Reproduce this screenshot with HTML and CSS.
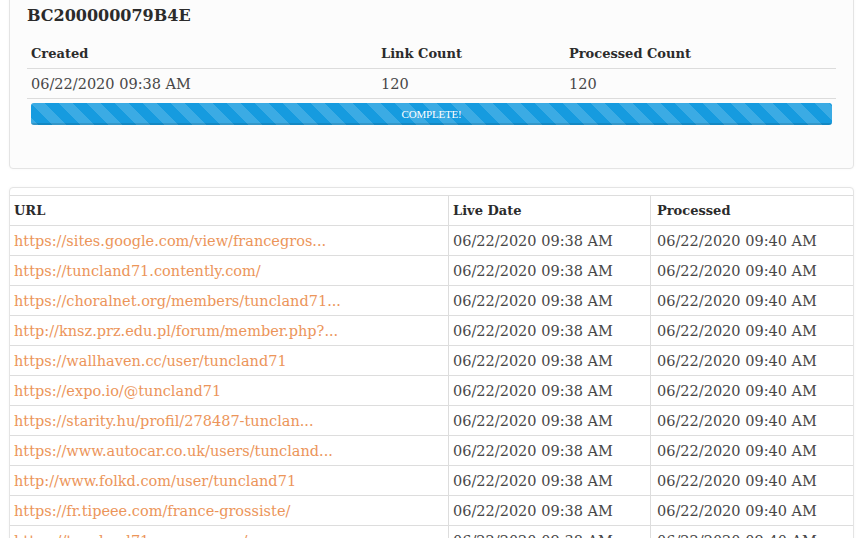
FILE: index.html
```html
<!DOCTYPE html>
<html lang="en">
<head>
<meta charset="utf-8">
<title>BC200000079B4E</title>
<link rel="stylesheet" href="styles.css">
</head>
<body>
<div class="page">
  <section class="card summary">
    <h2 class="batch-id">BC200000079B4E</h2>
    <table class="summary-table">
      <thead>
        <tr><th class="c-created">Created</th><th class="c-links">Link Count</th><th>Processed Count</th></tr>
      </thead>
      <tbody>
        <tr><td>06/22/2020 09:38 AM</td><td>120</td><td>120</td></tr>
      </tbody>
    </table>
    <div class="progress"><div class="progress-bar" style="width:100%">COMPLETE!</div></div>
  </section>

  <section class="card links">
    <table class="link-table">
      <thead>
        <tr><th class="c-url">URL</th><th class="c-live">Live Date</th><th>Processed</th></tr>
      </thead>
      <tbody>
        <tr><td><a href="#">https://sites.google.com/view/francegros...</a></td><td>06/22/2020 09:38 AM</td><td>06/22/2020 09:40 AM</td></tr>
        <tr><td><a href="#">https://tuncland71.contently.com/</a></td><td>06/22/2020 09:38 AM</td><td>06/22/2020 09:40 AM</td></tr>
        <tr><td><a href="#">https://choralnet.org/members/tuncland71...</a></td><td>06/22/2020 09:38 AM</td><td>06/22/2020 09:40 AM</td></tr>
        <tr><td><a href="#">http://knsz.prz.edu.pl/forum/member.php?...</a></td><td>06/22/2020 09:38 AM</td><td>06/22/2020 09:40 AM</td></tr>
        <tr><td><a href="#">https://wallhaven.cc/user/tuncland71</a></td><td>06/22/2020 09:38 AM</td><td>06/22/2020 09:40 AM</td></tr>
        <tr><td><a href="#">https://expo.io/@tuncland71</a></td><td>06/22/2020 09:38 AM</td><td>06/22/2020 09:40 AM</td></tr>
        <tr><td><a href="#">https://starity.hu/profil/278487-tunclan...</a></td><td>06/22/2020 09:38 AM</td><td>06/22/2020 09:40 AM</td></tr>
        <tr><td><a href="#">https://www.autocar.co.uk/users/tuncland...</a></td><td>06/22/2020 09:38 AM</td><td>06/22/2020 09:40 AM</td></tr>
        <tr><td><a href="#">http://www.folkd.com/user/tuncland71</a></td><td>06/22/2020 09:38 AM</td><td>06/22/2020 09:40 AM</td></tr>
        <tr><td><a href="#">https://fr.tipeee.com/france-grossiste/</a></td><td>06/22/2020 09:38 AM</td><td>06/22/2020 09:40 AM</td></tr>
        <tr><td><a href="#">https://tuncland71.exposure.co/</a></td><td>06/22/2020 09:38 AM</td><td>06/22/2020 09:40 AM</td></tr>
      </tbody>
    </table>
  </section>
</div>
</body>
</html>
```

FILE: styles.css
```css
html, body {
  margin: 0;
  background: #ffffff;
}

body {
  font-family: "DejaVu Serif", "Liberation Serif", serif;
  font-size: 14.5px;
  color: #474747;
}

.page {
  padding: 0 11px 0 9px;
  margin-top: -14px;
}

.card {
  background: #fcfcfc;
  border: 1px solid #e4e4e4;
  border-radius: 4px;
  box-shadow: 0 0 3px rgba(0, 0, 0, 0.04);
}

.summary {
  padding: 0 17px 43px 17px;
}

.batch-id {
  margin: 0;
  padding: 18px 0 12px 0;
  font-size: 16px;
  font-weight: bold;
  color: #2b2b2b;
  line-height: 22px;
}

table {
  width: 100%;
  border-collapse: collapse;
}

th {
  text-align: left;
  font-size: 13px;
  font-weight: bold;
  color: #2b2b2b;
}

.summary-table th,
.summary-table td {
  padding: 0 4px;
  height: 29px;
  border-bottom: 1px solid #dcdcdc;
}

.summary-table .c-created { width: 342px; }
.summary-table .c-links { width: 180px; }

.progress {
  margin: 4px 4px 0 4px;
  height: 22px;
  background: #e9e9e9;
  border-radius: 3px;
  overflow: hidden;
}

.progress-bar {
  height: 100%;
  background-color: #169bdf;
  background-image: linear-gradient(45deg,
    rgba(255, 255, 255, 0.16) 25%, transparent 25%,
    transparent 50%, rgba(255, 255, 255, 0.16) 50%,
    rgba(255, 255, 255, 0.16) 75%, transparent 75%, transparent);
  background-size: 28px 28px;
  box-shadow: inset 0 -2px 0 rgba(0, 0, 0, 0.12);
  color: #ffffff;
  font-family: "Liberation Serif", serif;
  font-size: 11px;
  line-height: 22px;
  text-align: center;
  letter-spacing: -0.2px;
}

.links {
  margin-top: 18px;
  padding-top: 7px;
  overflow: hidden;
  background: #ffffff;
}

.link-table th,
.link-table td {
  height: 29px;
  padding: 0 4px;
  border: 1px solid #dddddd;
  white-space: nowrap;
}

.link-table tr > :first-child { border-left: 0; padding-left: 4px; }
.link-table tr > :last-child { border-right: 0; padding-left: 6px; }

.link-table .c-url { width: 430px; }
.link-table .c-live { width: 193px; }

.link-table a {
  color: #ec955a;
  text-decoration: none;
}
```
